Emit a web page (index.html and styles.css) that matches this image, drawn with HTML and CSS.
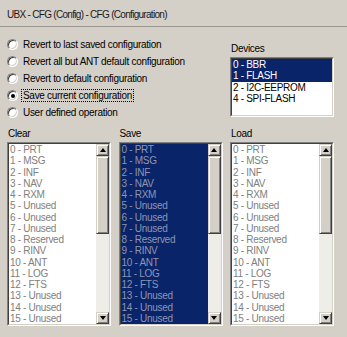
FILE: index.html
```html
<!DOCTYPE html>
<html>
<head>
<meta charset="utf-8">
<link rel="stylesheet" href="styles.css">
</head>
<body>
<div class="page">
  <div class="title">UBX - CFG (Config) - CFG (Configuration)</div>
  <div class="sep"></div>
  <div class="top">
    <div class="radios">
      <div class="radio-row"><span class="radio"></span><span class="rlabel">Revert to last saved configuration</span></div>
      <div class="radio-row"><span class="radio"></span><span class="rlabel">Revert all but ANT default configuration</span></div>
      <div class="radio-row"><span class="radio"></span><span class="rlabel">Revert to default configuration</span></div>
      <div class="radio-row"><span class="radio checked"></span><span class="rlabel focus">Save current configuration</span></div>
      <div class="radio-row"><span class="radio"></span><span class="rlabel">User defined operation</span></div>
    </div>
    <div class="devices">
      <div class="glabel">Devices</div>
      <div class="listbox dev">
        <div class="inner">
          <div class="items">
            <div class="item sel">0 - BBR</div>
            <div class="item sel">1 - FLASH</div>
            <div class="item">2 - I2C-EEPROM</div>
            <div class="item">4 - SPI-FLASH</div>
          </div>
        </div>
      </div>
    </div>
  </div>
  <div class="lists">
    <div class="col">
      <div class="glabel">Clear</div>
      <div class="listbox big">
        <div class="inner">
          <div class="items dis">
            <div class="item">0 - PRT</div><div class="item">1 - MSG</div><div class="item">2 - INF</div><div class="item">3 - NAV</div>
            <div class="item">4 - RXM</div><div class="item">5 - Unused</div><div class="item">6 - Unused</div><div class="item">7 - Unused</div>
            <div class="item">8 - Reserved</div><div class="item">9 - RINV</div><div class="item">10 - ANT</div><div class="item">11 - LOG</div>
            <div class="item">12 - FTS</div><div class="item">13 - Unused</div><div class="item">14 - Unused</div><div class="item">15 - Unused</div>
          </div>
          <div class="scroll">
            <div class="btn"><span class="arrow up"></span></div>
            <div class="thumb"></div>
            <div class="track"></div>
            <div class="btn"><span class="arrow down"></span></div>
          </div>
        </div>
      </div>
    </div>
    <div class="col">
      <div class="glabel">Save</div>
      <div class="listbox big">
        <div class="inner">
          <div class="items dis selall">
            <div class="item">0 - PRT</div><div class="item">1 - MSG</div><div class="item">2 - INF</div><div class="item">3 - NAV</div>
            <div class="item">4 - RXM</div><div class="item">5 - Unused</div><div class="item">6 - Unused</div><div class="item">7 - Unused</div>
            <div class="item">8 - Reserved</div><div class="item">9 - RINV</div><div class="item">10 - ANT</div><div class="item">11 - LOG</div>
            <div class="item">12 - FTS</div><div class="item">13 - Unused</div><div class="item">14 - Unused</div><div class="item">15 - Unused</div>
          </div>
          <div class="scroll">
            <div class="btn"><span class="arrow up"></span></div>
            <div class="thumb"></div>
            <div class="track"></div>
            <div class="btn"><span class="arrow down"></span></div>
          </div>
        </div>
      </div>
    </div>
    <div class="col">
      <div class="glabel">Load</div>
      <div class="listbox big">
        <div class="inner">
          <div class="items dis">
            <div class="item">0 - PRT</div><div class="item">1 - MSG</div><div class="item">2 - INF</div><div class="item">3 - NAV</div>
            <div class="item">4 - RXM</div><div class="item">5 - Unused</div><div class="item">6 - Unused</div><div class="item">7 - Unused</div>
            <div class="item">8 - Reserved</div><div class="item">9 - RINV</div><div class="item">10 - ANT</div><div class="item">11 - LOG</div>
            <div class="item">12 - FTS</div><div class="item">13 - Unused</div><div class="item">14 - Unused</div><div class="item">15 - Unused</div>
          </div>
          <div class="scroll">
            <div class="btn"><span class="arrow up"></span></div>
            <div class="thumb"></div>
            <div class="track"></div>
            <div class="btn"><span class="arrow down"></span></div>
          </div>
        </div>
      </div>
    </div>
  </div>
</div>
</body>
</html>
```

FILE: styles.css
```css
html, body {
  margin: 0;
  padding: 0;
  background: #d4d0c8;
}
body {
  font-family: "Liberation Sans", Arial, sans-serif;
  font-size: 10px;
  color: #000;
  letter-spacing: -0.3px;
}
.page {
  width: 347px;
  height: 337px;
  overflow: hidden;
}
.title {
  padding: 9px 0 5px 7px;
  line-height: 12px;
  height: 12px;
  letter-spacing: -0.7px;
  color: #1a1a1a;
}
.sep {
  height: 1px;
  background: #9a9791;
}
.top {
  display: flex;
  height: 101px;
}
.radios {
  padding: 9px 0 0 7px;
  display: flex;
  flex-direction: column;
}
.radio-row {
  height: 17px;
  display: flex;
  align-items: center;
  white-space: nowrap;
}
.radio {
  width: 9px;
  height: 9px;
  border-radius: 50%;
  background: #fff;
  border: 1px solid;
  border-color: #808080 #ffffff #ffffff #808080;
  box-shadow: inset 1px 1px 0 #404040, inset -1px -1px 0 #d4d0c8;
  position: relative;
  flex: none;
}
.radio.checked::after {
  content: "";
  position: absolute;
  left: 2.5px;
  top: 2.5px;
  width: 4px;
  height: 4px;
  border-radius: 50%;
  background: #000;
}
.rlabel {
  margin-left: 5px;
  line-height: 11px;
  padding: 0 1px 0 0;
}
.rlabel.focus {
  outline: 1px dotted #000;
  outline-offset: 0;
  margin-left: 4px;
  padding-left: 1px;
}
.devices {
  margin-left: auto;
  margin-right: 13px;
  width: 104px;
  padding-top: 16px;
}
.glabel {
  line-height: 12px;
  height: 12px;
  padding-left: 1px;
  margin-bottom: 2px;
}
.listbox {
  border: 1px solid;
  border-color: #808080 #ffffff #ffffff #808080;
  box-sizing: border-box;
}
.listbox .inner {
  border: 1px solid;
  border-color: #404040 #d4d0c8 #d4d0c8 #404040;
  height: 100%;
  box-sizing: border-box;
  display: flex;
  background: #fff;
}
.listbox.dev {
  height: 60px;
}
.items {
  flex: 1;
  min-width: 0;
  background: #fff;
}
.item {
  height: 11.25px;
  line-height: 11.25px;
  padding-left: 1px;
  white-space: nowrap;
}
.dev .item.sel {
  background: #0a246a;
  color: #fff;
}
.items.dis .item {
  color: #808080;
}
.items.selall {
  background: #0a246a;
}
.items.selall .item {
  color: #8e95b2;
}
.lists {
  display: grid;
  grid-template-columns: 104px 104px 104px;
  column-gap: 7.5px;
  padding-left: 7px;
}
.listbox.big {
  height: 184px;
}
.scroll {
  width: 13px;
  display: flex;
  flex-direction: column;
  flex: none;
}
.btn, .thumb {
  box-sizing: border-box;
  background: #d4d0c8;
  border: 1px solid;
  border-color: #d4d0c8 #404040 #404040 #d4d0c8;
  box-shadow: inset 1px 1px 0 #fff, inset -1px -1px 0 #808080;
}
.btn {
  height: 12px;
  display: flex;
  align-items: center;
  justify-content: center;
}
.thumb {
  height: 78px;
}
.track {
  height: 78px;
  background: #eeede8;
}
.arrow {
  width: 0;
  height: 0;
  border-left: 3.5px solid transparent;
  border-right: 3.5px solid transparent;
}
.arrow.up {
  border-bottom: 4px solid #000;
}
.arrow.down {
  border-top: 4px solid #000;
}
```
